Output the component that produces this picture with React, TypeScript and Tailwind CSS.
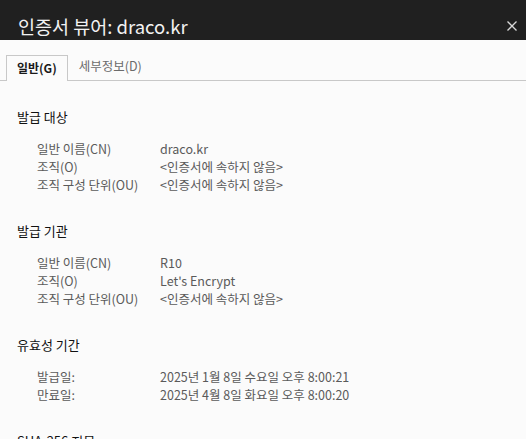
const font = { fontFamily: '"Noto Sans CJK KR", "Noto Sans", sans-serif' };

type Row = [string, string];

const sections: { title: string; rows: Row[] }[] = [
  {
    title: "발급 대상",
    rows: [
      ["일반 이름(CN)", "draco.kr"],
      ["조직(O)", "<인증서에 속하지 않음>"],
      ["조직 구성 단위(OU)", "<인증서에 속하지 않음>"],
    ],
  },
  {
    title: "발급 기관",
    rows: [
      ["일반 이름(CN)", "R10"],
      ["조직(O)", "Let's Encrypt"],
      ["조직 구성 단위(OU)", "<인증서에 속하지 않음>"],
    ],
  },
  {
    title: "유효성 기간",
    rows: [
      ["발급일:", "2025년 1월 8일 수요일 오후 8:00:21"],
      ["만료일:", "2025년 4월 8일 화요일 오후 8:00:20"],
    ],
  },
  { title: "SHA-256 지문", rows: [] },
];

export default function App() {
  return (
    <div className="h-[439px] w-[526px] overflow-hidden bg-[#fbfbfb]" style={font}>
      <div className="flex h-[40px] items-end justify-between bg-[#202020] pb-[2px] pl-[18px] pr-[9px]">
        <span className="text-[18.5px] leading-[24px] text-[#f2f2f2]">인증서 뷰어: draco.kr</span>
        <svg width="10" height="10" viewBox="0 0 10 10" className="mb-[7px]">
          <path d="M0.5 0.5L9.5 9.5M9.5 0.5L0.5 9.5" stroke="#d8d8d8" strokeWidth="1.3" />
        </svg>
      </div>

      <div className="flex items-end border-b border-[#c8c8c8] px-[6px] pt-[14px]">
        <div className="-mb-px flex h-[26px] items-center border border-b-0 border-[#c8c8c8] bg-[#fbfbfb] px-[10px] pb-[1px] text-[12px] font-bold text-[#1a1a1a]">
          일반(G)
        </div>
        <div className="flex h-[26px] items-center px-[11px] pb-[1px] text-[12.5px] text-[#6b6b6b]">세부정보(D)</div>
      </div>

      <div className="flex flex-col gap-[28px] pl-[17px] pt-[27px]">
        {sections.map((s) => (
          <div key={s.title}>
            <div className="text-[13px] leading-[18px] text-[#111]">{s.title}</div>
            {s.rows.length > 0 && (
              <div className="mt-[14px] pl-[20px]">
                {s.rows.map(([k, v]) => (
                  <div key={k} className="flex text-[12.5px] leading-[18px] text-[#5a5a5a]">
                    <span className="w-[123px]">{k}</span>
                    <span>{v}</span>
                  </div>
                ))}
              </div>
            )}
          </div>
        ))}
      </div>
    </div>
  );
}
